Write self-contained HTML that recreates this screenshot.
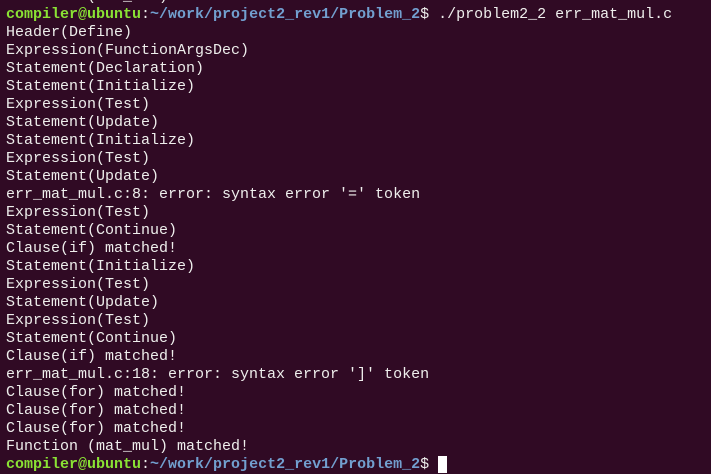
<!DOCTYPE html>
<html><head><meta charset="utf-8"><style>
html,body{margin:0;padding:0;}
body{width:711px;height:460px;overflow:hidden;background:#300a24;position:relative;}
pre{position:absolute;left:6px;top:-12px;margin:0;font-family:"Liberation Mono",monospace;font-size:15px;line-height:18px;color:#eeeeec;white-space:pre;}
.g{color:#8ae234;font-weight:bold}
.b{color:#729fcf;font-weight:bold}
.c{background:#fff;color:#fff}
</style></head><body>
<pre>Function (mat_mul) matched!
<span class="g">compiler@ubuntu</span>:<span class="b">~/work/project2_rev1/Problem_2</span>$ ./problem2_2 err_mat_mul.c
Header(Define)
Expression(FunctionArgsDec)
Statement(Declaration)
Statement(Initialize)
Expression(Test)
Statement(Update)
Statement(Initialize)
Expression(Test)
Statement(Update)
err_mat_mul.c:8: error: syntax error '=' token
Expression(Test)
Statement(Continue)
Clause(if) matched!
Statement(Initialize)
Expression(Test)
Statement(Update)
Expression(Test)
Statement(Continue)
Clause(if) matched!
err_mat_mul.c:18: error: syntax error ']' token
Clause(for) matched!
Clause(for) matched!
Clause(for) matched!
Function (mat_mul) matched!
<span class="g">compiler@ubuntu</span>:<span class="b">~/work/project2_rev1/Problem_2</span>$ <span class="c"> </span></pre>
</body></html>
